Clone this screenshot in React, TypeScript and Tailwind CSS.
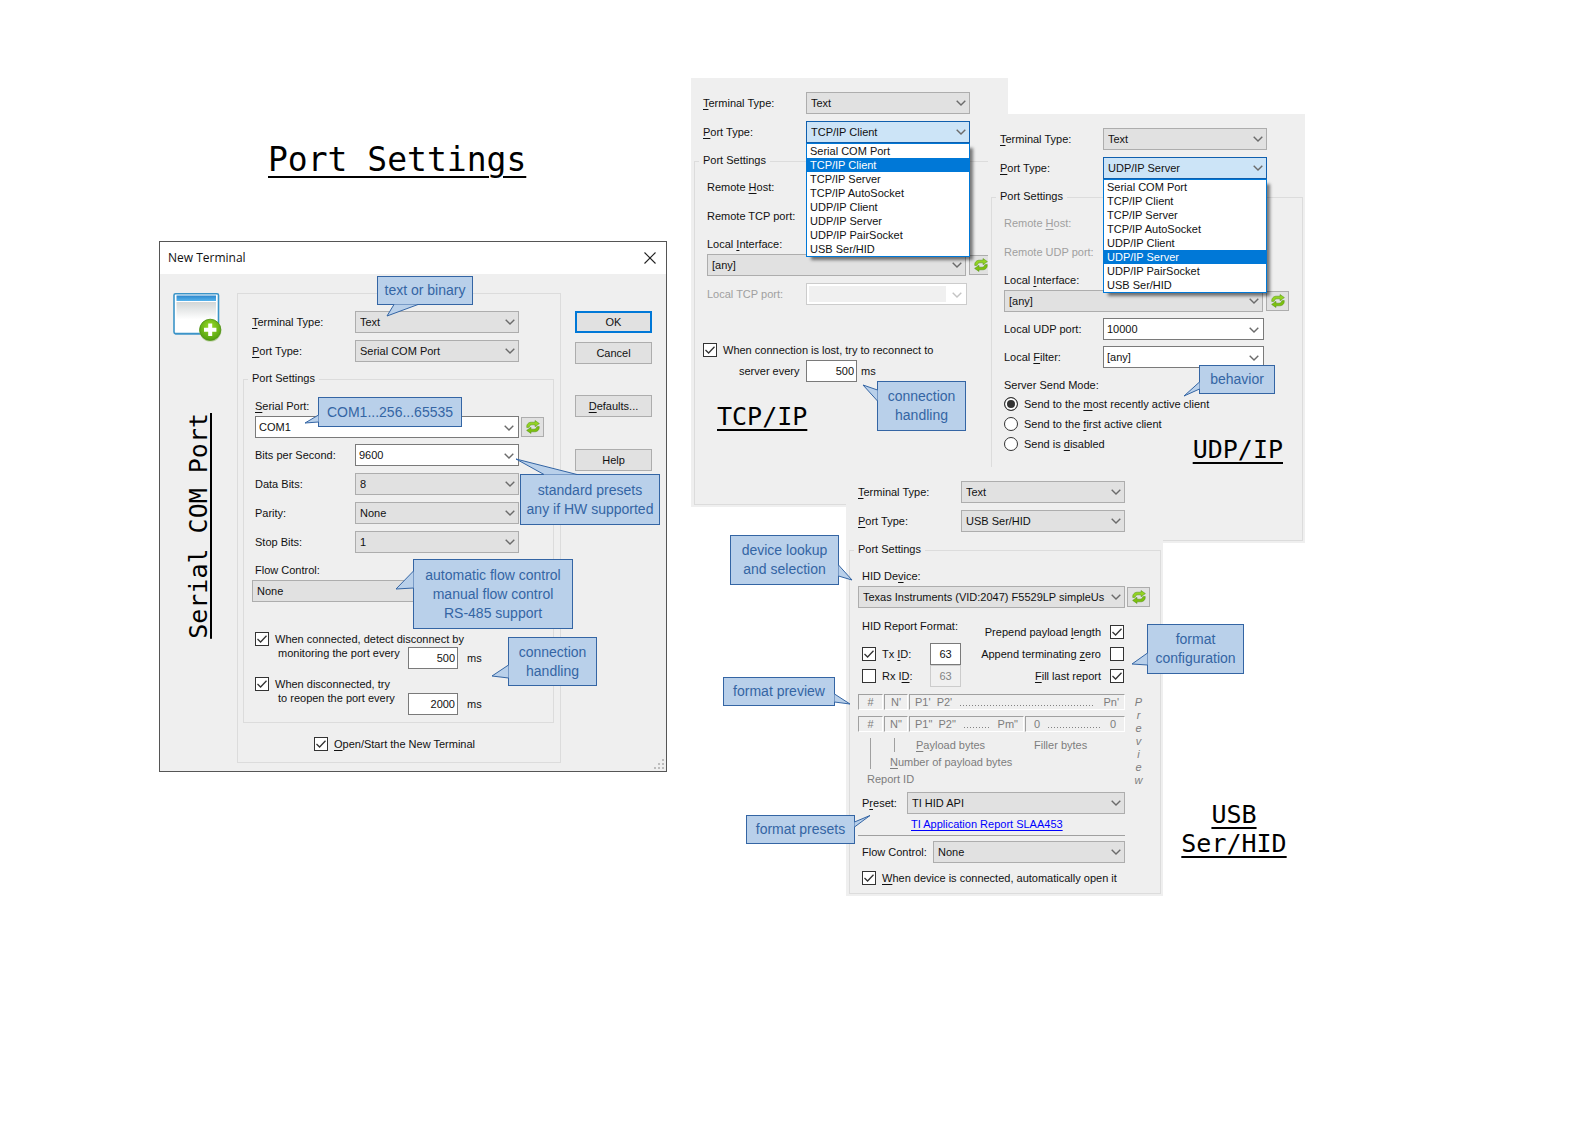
import { Fragment, useId, useState, type ReactNode } from "react";

const PORT_TYPES = [
  "Serial COM Port",
  "TCP/IP Client",
  "TCP/IP Server",
  "TCP/IP AutoSocket",
  "UDP/IP Client",
  "UDP/IP Server",
  "UDP/IP PairSocket",
  "USB Ser/HID",
];

/** Renders a caption whose access key is marked with a leading "&". */
function Caption({ text }: { text: string }) {
  const at = text.indexOf("&");
  if (at < 0) return <>{text}</>;
  return (
    <>
      {text.slice(0, at)}
      <span className="underline underline-offset-2">{text[at + 1]}</span>
      {text.slice(at + 2)}
    </>
  );
}

function Chevron({ className = "text-[#6b6b6b]" }: { className?: string }) {
  return (
    <svg
      viewBox="0 0 10 6"
      className={`pointer-events-none absolute right-1 top-2 h-[6px] w-[10px] ${className}`}
      fill="none"
      stroke="currentColor"
      strokeWidth="1.4"
    >
      <path d="M0.7 0.7 L5 5 L9.3 0.7" />
    </svg>
  );
}

function Select({ id, label, value, open = false }: { id?: string; label?: string; value: string; open?: boolean }) {
  return (
    <div className="relative h-[22px] min-w-0 flex-1">
      <select
        id={id}
        aria-label={label}
        className={`h-full w-full appearance-none truncate border pl-1 pr-4 text-clip outline-none ${
          open ? "border-[#0f5fae] bg-[#cce4f7]" : "border-[#adadad] bg-[#e1e1e1]"
        }`}
      >
        <option>{value}</option>
      </select>
      <Chevron />
      {open && (
        <ul
          role="listbox"
          aria-label="Port types"
          className="absolute inset-x-0 top-full z-10 border border-[#0078d7] bg-white shadow-[4px_4px_3px_-1px_rgba(0,0,0,0.5)]"
        >
          {PORT_TYPES.map((t) => (
            <li
              key={t}
              role="option"
              aria-selected={t === value}
              className={`h-[14px] whitespace-nowrap pl-[3px] leading-[15px] ${t === value ? "bg-[#0078d7] text-white" : ""}`}
            >
              {t}
            </li>
          ))}
        </ul>
      )}
    </div>
  );
}

function Combo({ id, value, disabled = false }: { id?: string; value: string; disabled?: boolean }) {
  return (
    <div className={`relative h-[22px] min-w-0 flex-1 border bg-white ${disabled ? "border-[#cccccc]" : "border-[#7a7a7a]"}`}>
      {disabled ? (
        <input id={id} disabled className="m-[2px] block h-4 w-[137px] bg-[#f0f0f0]" />
      ) : (
        <input id={id} defaultValue={value} className="h-full w-full bg-transparent pl-[3px] outline-none" />
      )}
      <Chevron className={disabled ? "text-[#c4c4c4]" : "text-[#6b6b6b]"} />
    </div>
  );
}

/** Caption on the left, a control filling the rest of the line. */
function Field({
  label,
  className = "",
  labelClass = "w-[103px]",
  children,
}: {
  label: string;
  className?: string;
  labelClass?: string;
  children?: (id: string) => ReactNode;
}) {
  const id = useId();
  return (
    <div className={`flex h-[22px] items-center ${className}`}>
      <label htmlFor={id} className={`shrink-0 whitespace-nowrap ${labelClass}`}>
        <Caption text={label} />
      </label>
      {children?.(id)}
    </div>
  );
}

function Check({
  label,
  checked = false,
  reverse = false,
  className = "",
  gap = "gap-[6px]",
}: {
  label: string;
  checked?: boolean;
  reverse?: boolean;
  className?: string;
  gap?: string;
}) {
  const [on, setOn] = useState(checked);
  return (
    <label className={`flex items-center whitespace-nowrap ${gap} ${reverse ? "flex-row-reverse" : ""} ${className}`}>
      <span className="relative block h-[14px] w-[14px] shrink-0">
        <input
          type="checkbox"
          checked={on}
          onChange={() => setOn(!on)}
          className="block h-[14px] w-[14px] appearance-none border border-[#333333] bg-white"
        />
        {on && (
          <svg viewBox="0 0 14 14" className="pointer-events-none absolute inset-0" fill="none" stroke="#333" strokeWidth="1.3">
            <path d="M2.5 7 L5.6 10 L11.5 3.8" />
          </svg>
        )}
      </span>
      <span>
        <Caption text={label} />
      </span>
    </label>
  );
}

function Radio({ label, checked = false }: { label: string; checked?: boolean }) {
  return (
    <label className="flex h-5 items-center gap-[6px] whitespace-nowrap">
      <input
        type="radio"
        name="send-mode"
        defaultChecked={checked}
        className="h-[14px] w-[14px] shrink-0 appearance-none rounded-full border border-[#333333] bg-white checked:bg-[#333333] checked:shadow-[inset_0_0_0_2px_white]"
      />
      <span>
        <Caption text={label} />
      </span>
    </label>
  );
}

function NumberBox({ value, label, disabled = false, className = "" }: { value: string; label: string; disabled?: boolean; className?: string }) {
  return (
    <input
      defaultValue={value}
      aria-label={label}
      disabled={disabled}
      className={`h-[22px] border outline-none ${disabled ? "border-[#cccccc] bg-[#f0f0f0] text-[#838383]" : "border-[#7a7a7a] bg-white"} ${className}`}
    />
  );
}

function RefreshButton({ className = "ml-[3px]" }: { className?: string }) {
  return (
    <button
      type="button"
      aria-label="Refresh"
      className={`flex h-5 w-[23px] shrink-0 items-center justify-center border border-[#adadad] bg-[#e1e1e1] ${className}`}
    >
      <svg viewBox="0 0 14 14" className="h-[14px] w-[14px]" stroke="#4f8f12" strokeWidth="0.5" strokeLinejoin="round">
        <path d="M0.8 7.6 C0.3 4.2 2.6 2.2 5.4 2.2 L9 2.2 L9 0.5 L13.4 3.6 L9 6.7 L9 4.8 L6 4.8 C4.2 4.8 3.4 5.8 3.3 7.2 Z" fill="#93d322" />
        <path d="M13.2 6.4 C13.7 9.8 11.4 11.8 8.6 11.8 L5 11.8 L5 13.5 L0.6 10.4 L5 7.3 L5 9.2 L8 9.2 C9.8 9.2 10.6 8.2 10.7 6.8 Z" fill="#7cc00f" />
      </svg>
    </button>
  );
}

/** Rectangular speech bubble; tail points are relative to the box's corner. */
function Callout({ lines, box, tail }: { lines: string[]; box: string; tail: string }) {
  return (
    <div
      className={`absolute z-20 flex flex-col items-center justify-center border border-[#3465a4] bg-[#b9d0ea] text-[14px] leading-[19px] text-[#3465a4] ${box}`}
    >
      <svg className="pointer-events-none absolute -left-px -top-px h-px w-px overflow-visible">
        <polygon points={tail} fill="#b9d0ea" />
        <polyline points={tail} fill="none" stroke="#3465a4" />
      </svg>
      {lines.map((l) => (
        <span key={l} className="relative whitespace-nowrap">
          {l}
        </span>
      ))}
    </div>
  );
}

function PortGroup({ className = "", children }: { className?: string; children: ReactNode }) {
  return (
    <fieldset className={`min-w-0 border border-[#dcdcdc] pl-2 ${className}`}>
      <legend className="-ml-1 h-[18px] px-1 leading-[17px]">Port Settings</legend>
      {children}
    </fieldset>
  );
}

function TypeRows({ port, open = false, className = "" }: { port: string; open?: boolean; className?: string }) {
  return (
    <div className={`flex flex-col gap-[7px] ${className}`}>
      <Field label="&Terminal Type:">{(id) => <Select id={id} value="Text" />}</Field>
      <Field label="&Port Type:">{(id) => <Select id={id} value={port} open={open} />}</Field>
    </div>
  );
}

function Panel({ port, open, className, children }: { port: string; open?: boolean; className: string; children: ReactNode }) {
  return (
    <section className={`relative flex flex-col bg-[#efefef] ${className}`}>
      <TypeRows port={port} open={open} className="pl-3 pr-[38px] pt-[14px]" />
      {children}
    </section>
  );
}

const heading = "font-['DejaVu_Sans_Mono',monospace] text-[25px] leading-[29px] text-black underline decoration-2";

function WindowIcon() {
  return (
    <svg viewBox="0 0 50 50" className="h-[50px] w-[50px]">
      <defs>
        <linearGradient id="pane" x1="0" y1="0" x2="0" y2="1">
          <stop offset="0" stopColor="#d2d6d6" />
          <stop offset="0.6" stopColor="#ffffff" />
        </linearGradient>
        <linearGradient id="bar" x1="0" y1="0" x2="0" y2="1">
          <stop offset="0" stopColor="#2c86cc" />
          <stop offset="1" stopColor="#56b4ec" />
        </linearGradient>
        <radialGradient id="plus" cx="0.5" cy="0.35" r="0.7">
          <stop offset="0" stopColor="#9bdc2a" />
          <stop offset="1" stopColor="#4b9a0a" />
        </radialGradient>
      </defs>
      <rect x="1.5" y="2" width="44.5" height="40" rx="1.5" fill="#9cc3dd" />
      <rect x="1" y="0.8" width="44.5" height="39.8" rx="1.5" fill="#ffffff" stroke="#3b94c8" strokeWidth="1.6" />
      <rect x="3.5" y="2.5" width="39.5" height="5.5" fill="url(#bar)" />
      <rect x="3.5" y="9" width="39.5" height="29" fill="url(#pane)" />
      <circle cx="37.4" cy="37.6" r="11" fill="#b9cf9d" />
      <circle cx="37.2" cy="36.8" r="10.6" fill="url(#plus)" stroke="#4d8f14" strokeWidth="0.8" />
      <path d="M35.2 30.6h4v4.2h4.2v4h-4.2v4.2h-4v-4.2H31v-4h4.2z" fill="#ffffff" />
    </svg>
  );
}

function DialogButton({ label, primary = false, className = "" }: { label: string; primary?: boolean; className?: string }) {
  return (
    <button
      type="button"
      className={`h-[22px] w-[77px] bg-[#e1e1e1] ${primary ? "border-2 border-[#0078d7]" : "border border-[#adadad]"} ${className}`}
    >
      <Caption text={label} />
    </button>
  );
}

function NewTerminalDialog() {
  return (
    <section className="relative border border-[#555555] bg-[#efefef]">
      <header className="flex h-8 items-center justify-between bg-white pl-2 pr-[10px]">
        <h2 className="font-['Open_Sans',sans-serif] text-[12px]">New Terminal</h2>
        <button type="button" aria-label="Close">
          <svg viewBox="0 0 12 12" className="h-3 w-3" stroke="#222" strokeWidth="1.1">
            <path d="M0.5 0.5 L11.5 11.5 M11.5 0.5 L0.5 11.5" />
          </svg>
        </button>
      </header>
      <div className="flex pb-2 pt-[19px]">
        <div className="flex w-[77px] shrink-0 flex-col pl-[13px]">
          <WindowIcon />
          <h3 className={`ml-[11px] mt-[70px] rotate-180 self-start whitespace-nowrap -underline-offset-2 [writing-mode:vertical-rl] ${heading}`}>
            Serial COM Port
          </h3>
        </div>
        <div className="min-w-0 flex-1 border border-[#dcdcdc] pb-[11px] pt-[17px]">
          <TypeRows port="Serial COM Port" className="pl-[14px] pr-[41px]" />
          <PortGroup className="ml-[5px] mr-[6px] mt-2 pb-[7px]">
            <label htmlFor="serial-port" className="ml-[3px] mt-[9px] block h-[18px] leading-[18px]">
              <Caption text="&Serial Port:" />
            </label>
            <div className="ml-[3px] mr-[9px] mt-px flex items-center">
              <Combo id="serial-port" value="COM1" />
              <RefreshButton className="ml-[2px]" />
            </div>
            <div className="ml-[3px] mr-[34px] mt-[6px] flex flex-col gap-[7px]">
              <Field label="Bits per Second:" labelClass="w-[100px]">{(id) => <Combo id={id} value="9600" />}</Field>
              <Field label="Data Bits:" labelClass="w-[100px]">{(id) => <Select id={id} value="8" />}</Field>
              <Field label="Parity:" labelClass="w-[100px]">{(id) => <Select id={id} value="None" />}</Field>
              <Field label="Stop Bits:" labelClass="w-[100px]">{(id) => <Select id={id} value="1" />}</Field>
            </div>
            <label htmlFor="flow" className="ml-[3px] mt-2 block h-[18px] leading-[18px]">
              Flow Control:
            </label>
            <div className="mr-[34px] mt-px flex">
              <Select id="flow" value="None" />
            </div>
            <Check checked label="When connected, detect disconnect by" className="ml-[3px] mt-[30px] h-[14px]" />
            <div className="ml-[26px] flex h-[23px]">
              <span className="w-[130px] whitespace-nowrap leading-[15px]">monitoring the port every</span>
              <NumberBox label="Monitoring interval" value="500" className="w-[50px] self-end pr-[2px] text-right" />
              <span className="ml-[9px] self-end leading-[22px]">ms</span>
            </div>
            <Check checked label="When disconnected, try" className="ml-[3px] mt-2 h-[14px]" />
            <div className="ml-[26px] flex h-6">
              <span className="w-[130px] whitespace-nowrap leading-[15px]">to reopen the port every</span>
              <NumberBox label="Reopen interval" value="2000" className="w-[50px] self-end pr-[2px] text-right" />
              <span className="ml-[9px] self-end leading-[22px]">ms</span>
            </div>
          </PortGroup>
          <Check checked label="&Open/Start the New Terminal" className="ml-[76px] mt-[14px] h-[14px]" />
        </div>
        <div className="flex w-[105px] shrink-0 flex-col pl-[14px] pt-[18px]">
          <DialogButton primary label="OK" />
          <DialogButton label="Cancel" className="mt-[9px]" />
          <DialogButton label="&Defaults..." className="mt-[31px]" />
          <DialogButton label="Help" className="mt-8" />
        </div>
      </div>
      <svg viewBox="0 0 10 10" className="absolute bottom-[2px] right-[2px] h-[10px] w-[10px]" fill="#bdbdbd">
        <path d="M8 0h2v2H8zM8 4h2v2H8zM8 8h2v2H8zM4 4h2v2H4zM4 8h2v2H4zM0 8h2v2H0z" />
      </svg>

      <Callout lines={["text or binary"]} box="left-[217px] top-[34px] h-[29px] w-[96px]" tail="17,28.5 10,40 41,28.5" />
      <Callout lines={["COM1...256...65535"]} box="left-[158px] top-[155px] h-[30px] w-[144px]" tail="0.5,18 -13,26 0.5,25" />
      <Callout lines={["standard presets", "any if HW supported"]} box="left-[360px] top-[232px] h-[51px] w-[140px]" tail="24,0.5 -4,-15 57,0.5" />
      <Callout
        lines={["automatic flow control", "manual flow control", "RS-485 support"]}
        box="left-[253px] top-[317px] h-[70px] w-[160px]"
        tail="0.5,12 -17,30 0.5,29"
      />
      <Callout lines={["connection", "handling"]} box="left-[348px] top-[395px] h-[49px] w-[89px]" tail="0.5,28 -16,39 0.5,41" />
    </section>
  );
}

/** Host, remote port and local interface lines shared by the IP panels. */
function AddressFields({ protocol, disabled = false }: { protocol: string; disabled?: boolean }) {
  const tone = disabled ? "text-[#a0a0a0]" : "";
  const id = useId();
  return (
    <>
      <Field label="Remote &Host:" className={`ml-1 mt-[6px] ${tone}`} />
      <Field label={`Remote ${protocol} port:`} className={`ml-1 mt-[7px] ${tone}`} />
      <label htmlFor={id} className="ml-1 mt-2 block h-[18px] leading-[18px]">
        <Caption text="Local &Interface:" />
      </label>
      <div className="ml-1 mt-px flex items-center">
        <Select id={id} value="[any]" />
        <RefreshButton />
      </div>
    </>
  );
}

function TcpPanel() {
  return (
    <Panel port="TCP/IP Client" open className="col-[1/4] row-[1/4]">
      <PortGroup className="mb-[2px] ml-[3px] mr-[2px] mt-[9px] flex-1 pr-[13px]">
        <AddressFields protocol="TCP" />
        <Field label="Local TCP port:" labelClass="w-[99px] text-[#a0a0a0]" className="ml-1 mr-[25px] mt-[7px]">
          {(id) => <Combo id={id} value="" disabled />}
        </Field>
        <Check checked label="When connection is lost, try to reconnect to" className="mt-[38px] h-[14px]" />
        <div className="mt-[3px] flex h-[22px] items-center">
          <span className="w-[103px] whitespace-nowrap pl-9">server every</span>
          <NumberBox label="Reconnect interval" value="500" className="w-[51px] pr-[2px] text-right" />
          <span className="ml-1">ms</span>
        </div>
        <h3 className={`ml-[14px] mt-5 underline-offset-[4px] ${heading}`}>TCP/IP</h3>
      </PortGroup>
      <Callout lines={["connection", "handling"]} box="left-[186px] top-[303px] h-[50px] w-[89px]" tail="0.5,9 -14,4 0.5,20" />
    </Panel>
  );
}

function UdpPanel() {
  return (
    <Panel port="UDP/IP Server" open className="col-[3/6] row-[2/5]">
      <PortGroup className="mb-[2px] ml-[3px] mr-[2px] mt-[9px] flex-1 pr-[13px]">
        <AddressFields protocol="UDP" disabled />
        <Field label="Local UDP port:" labelClass="w-[99px]" className="ml-1 mr-[25px] mt-[6px]">
          {(id) => <Combo id={id} value="10000" />}
        </Field>
        <Field label="Local &Filter:" labelClass="w-[99px]" className="ml-1 mr-[25px] mt-[6px]">
          {(id) => <Combo id={id} value="[any]" />}
        </Field>
        <p className="ml-1 mt-2 h-[18px] leading-[18px]">Server Send Mode:</p>
        <div className="ml-1 flex items-end justify-between">
          <div className="w-0">
            <Radio checked label="Send to the &most recently active client" />
            <Radio label="Send to the &first active client" />
            <Radio label="Send is &disabled" />
          </div>
          <h3 className={`-mb-[10px] mr-[6px] underline-offset-[4px] ${heading}`}>UDP/IP</h3>
        </div>
      </PortGroup>
      <Callout lines={["behavior"]} box="left-[211px] top-[251px] h-[29px] w-[76px]" tail="0.5,17 -15,31 0.5,24" />
    </Panel>
  );
}

function Cell({ className, children }: { className: string; children: ReactNode }) {
  return (
    <div className={`flex h-4 items-center justify-between overflow-hidden whitespace-nowrap border border-b-white border-l-[#a0a0a0] border-r-white border-t-[#a0a0a0] ${className}`}>
      {children}
    </div>
  );
}

const dots = "mx-2 mb-[3px] h-px flex-1 self-end bg-[repeating-linear-gradient(90deg,#838383_0_1px,transparent_1px_3px)]";

function FormatPreview() {
  return (
    <div className="mt-[7px] flex text-[#7d7d7d]">
      <div className="min-w-0 flex-1">
        <div className="flex gap-px">
          <Cell className="w-[25px] justify-center">#</Cell>
          <Cell className="w-6 justify-center">N'</Cell>
          <Cell className="flex-1 px-[5px]">
            <span>P1'&nbsp; P2'</span>
            <span className={dots} />
            <span>Pn'</span>
          </Cell>
        </div>
        <div className="mt-[6px] flex gap-px">
          <Cell className="w-[25px] justify-center">#</Cell>
          <Cell className="w-6 justify-center">N"</Cell>
          <Cell className="w-[115px] px-[5px]">
            <span>P1"&nbsp; P2"</span>
            <span className={dots} />
            <span>Pm"</span>
          </Cell>
          <Cell className="flex-1 px-2">
            <span>0</span>
            <span className={dots} />
            <span>0</span>
          </Cell>
        </div>
        <div className="ml-3 mt-[6px] h-[31px] border-l border-[#a0a0a0] leading-[16px]">
          <div className="ml-[23px] flex h-[14px] border-l border-[#a0a0a0] pl-[21px] leading-[14px]">
            <span className="w-[118px]">
              <Caption text="&Payload bytes" />
            </span>
            <span>Filler bytes</span>
          </div>
          <div className="ml-[19px] mt-[2px]">
            <Caption text="&Number of payload bytes" />
          </div>
        </div>
        <div className="ml-[9px] mt-[2px] h-[17px] leading-[17px]">Report ID</div>
      </div>
      <div className="flex w-[27px] shrink-0 flex-col items-center pt-[2px] italic leading-[13px] -mr-[2px]">
        {"Preview".split("").map((c, i) => (
          <Fragment key={i}>
            <span>{c}</span>
          </Fragment>
        ))}
      </div>
    </div>
  );
}

function UsbPanel() {
  return (
    <Panel port="USB Ser/HID" className="col-[2/5] row-[3/6]">
      <PortGroup className="mb-[2px] ml-[3px] mr-[2px] mt-[9px] flex-1 pr-[10px]">
        <label htmlFor="hid" className="ml-1 mt-2 block h-[18px] leading-[18px]">
          <Caption text="HID De&vice:" />
        </label>
        <div className="mt-px flex items-center">
          <Select id="hid" value="Texas Instruments (VID:2047) F5529LP simpleUs" />
          <RefreshButton className="ml-[2px]" />
        </div>
        <div className="flex justify-between pl-1 pr-[26px]">
          <div className="whitespace-nowrap pt-[9px]">
            <p className="h-[18px] leading-[18px]">HID Report Format:</p>
            <div className="mt-2 flex h-[22px] items-center">
              <Check checked label="Tx &ID:" className="w-[68px]" />
              <NumberBox label="Tx ID value" value="63" className="w-[31px] text-center" />
            </div>
            <div className="flex h-[22px] items-center">
              <Check label="Rx I&D:" className="w-[68px]" />
              <NumberBox label="Rx ID value" value="63" disabled className="w-[31px] text-center" />
            </div>
          </div>
          <div className="flex flex-col pt-[13px]">
            <Check reverse checked label="Prepend payload &length" gap="gap-[9px]" className="h-[22px]" />
            <Check reverse label="Append terminating &zero" gap="gap-[9px]" className="h-[22px]" />
            <Check reverse checked label="&Fill last report" gap="gap-[9px]" className="h-[22px]" />
          </div>
        </div>
        <FormatPreview />
        <Field label="P&reset:" labelClass="w-[45px]" className="ml-1 mr-[25px] mt-1">
          {(id) => <Select id={id} value="TI HID API" />}
        </Field>
        <a href="#slaa453" className="ml-[53px] mt-px block h-[18px] leading-[18px] text-[#0000ff] underline underline-offset-2">
          TI Application Report SLAA453
        </a>
        <hr className="mr-[25px] mt-[2px] border-[#a0a0a0]" />
        <Field label="Flow Control:" labelClass="w-[71px]" className="ml-1 mr-[25px] mt-[5px]">
          {(id) => <Select id={id} value="None" />}
        </Field>
        <Check checked label="&When device is connected, automatically open it" className="ml-1 mt-2 h-[14px]" />
      </PortGroup>
      <Callout lines={["device lookup", "and selection"]} box="-left-[116px] top-[68px] h-[50px] w-[109px]" tail="108.5,30 122,45 108.5,41" />
      <Callout lines={["format preview"]} box="-left-[123px] top-[210px] h-[29px] w-[112px]" tail="111.5,17 127,27 111.5,25" />
      <Callout lines={["format presets"]} box="-left-[100px] top-[348px] h-[29px] w-[109px]" tail="108.5,7 124,0.5 108.5,12" />
      <Callout lines={["format", "configuration"]} box="left-[301px] top-[157px] h-[50px] w-[97px]" tail="0.5,29 -15,40 0.5,41" />
    </Panel>
  );
}

export default function App() {
  return (
    <main className="min-h-screen bg-white pb-12 pl-[159px] pr-[283px] pt-[78px] font-['Liberation_Sans',Arial,sans-serif] text-[11px] text-[#111111]">
      <div className="grid grid-cols-[minmax(508px,508fr)_minmax(614px,614fr)] items-start gap-6">
        <div>
          <h1 className="mb-[62px] mt-[62px] pl-[109px] font-['DejaVu_Sans_Mono',monospace] text-[33px] leading-[39px] text-black underline decoration-2 underline-offset-[5px]">
            Port Settings
          </h1>
          <NewTerminalDialog />
        </div>
        <div className="grid grid-cols-[155fr_142fr_20fr_155fr_142fr] grid-rows-[36px_353px_40px_36px_353px]">
          <TcpPanel />
          <UdpPanel />
          <UsbPanel />
          <h3 className={`col-[5/6] row-[5/6] mb-[38px] self-end text-center underline-offset-[4px] ${heading}`}>
            USB
            <br />
            Ser/HID
          </h3>
        </div>
      </div>
    </main>
  );
}
